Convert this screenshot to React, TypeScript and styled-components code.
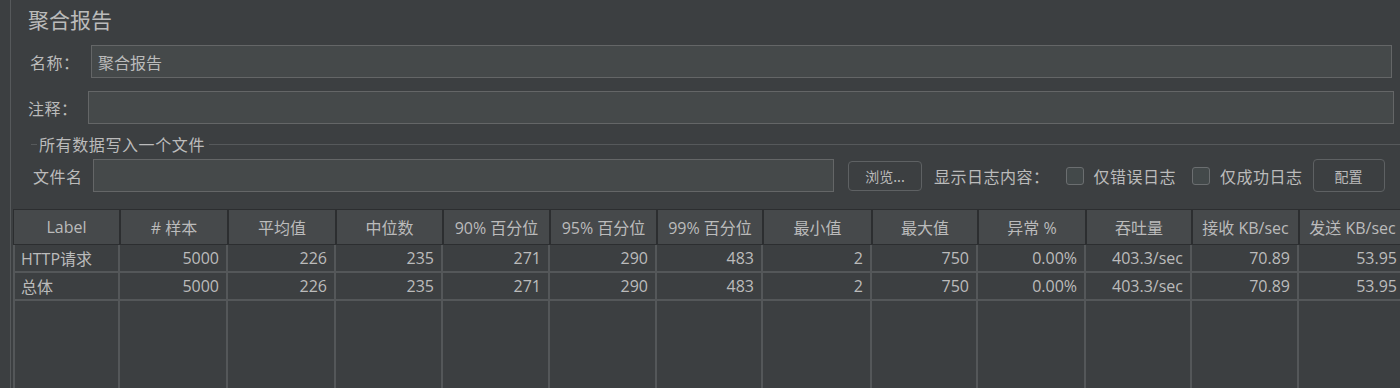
import React from "react";
import styled, { createGlobalStyle } from "styled-components";

const GlobalStyle = createGlobalStyle`
  html, body {
    margin: 0;
    padding: 0;
    background: #3c3f41;
    overflow: hidden;
  }
  body {
    font-family: "Open Sans", "Noto Sans CJK SC", sans-serif;
    color: #bbbbbb;
  }
`;

const Page = styled.div`
  width: 1400px;
  height: 388px;
  background: #3c3f41;
  display: flex;
  overflow: hidden;
`;

const Gutter = styled.div`
  width: 10px;
  flex: none;
  border-right: 1px solid #56595b;
`;

const Panel = styled.div`
  flex: 1;
  min-width: 0;
  display: flex;
  flex-direction: column;
  padding-left: 2px;
`;

const Title = styled.div`
  font-family: "Noto Sans CJK SC", sans-serif;
  font-size: 21px;
  line-height: 28px;
  height: 28px;
  margin-top: 5px;
  padding-left: 15px;
  color: #bbbbbb;
`;

const FieldRow = styled.div<{ $pl: number; $pr: number; $mt: number }>`
  display: flex;
  align-items: center;
  padding-left: ${(p) => p.$pl}px;
  padding-right: ${(p) => p.$pr}px;
  margin-top: ${(p) => p.$mt}px;
`;

const Label = styled.span<{ $w?: number; $ml?: number }>`
  font-family: "Noto Sans CJK SC", sans-serif;
  font-size: 16px;
  letter-spacing: 0.5px;
  color: #bbbbbb;
  width: ${(p) => (p.$w ? `${p.$w}px` : "auto")};
  margin-left: ${(p) => p.$ml ?? 0}px;
  flex: none;
  white-space: nowrap;
`;

const TextInput = styled.div`
  flex: 1;
  height: 31px;
  background: #45494a;
  border: 1px solid #646667;
  display: flex;
  align-items: center;
  padding-left: 6px;
  font-family: "Noto Sans CJK SC", sans-serif;
  font-size: 16px;
  color: #bbbbbb;
`;

const Legend = styled.div`
  display: flex;
  align-items: center;
  margin-top: 9px;
  padding-left: 18px;
  height: 22px;
  &::before {
    content: "";
    width: 6px;
    height: 1px;
    background: #56595b;
    margin-right: 2px;
  }
  &::after {
    content: "";
    flex: 1;
    height: 1px;
    background: #56595b;
    margin-left: 4px;
  }
`;

const LegendText = styled.span`
  font-family: "Noto Sans CJK SC", sans-serif;
  font-size: 16px;
  letter-spacing: 0.6px;
  color: #bbbbbb;
`;

const FileRow = styled.div`
  display: flex;
  align-items: center;
  margin-top: 4px;
  padding-left: 20px;
  height: 33px;
`;

const FileInput = styled.div`
  width: 739px;
  height: 31px;
  background: #45494a;
  border: 1px solid #646667;
  flex: none;
`;

const Button = styled.div<{ $w: number; $h: number; $ml: number }>`
  width: ${(p) => p.$w}px;
  height: ${(p) => p.$h}px;
  margin-left: ${(p) => p.$ml}px;
  box-sizing: border-box;
  border: 1px solid #5e6163;
  border-radius: 4px;
  background: #3c3f41;
  display: flex;
  align-items: center;
  justify-content: center;
  font-family: "Noto Sans CJK SC", sans-serif;
  font-size: 14px;
  color: #bbbbbb;
  flex: none;
`;

const Check = styled.span<{ $ml: number }>`
  width: 18px;
  height: 18px;
  box-sizing: border-box;
  border: 1px solid #6b6e70;
  border-radius: 3px;
  background: #43494a;
  margin-left: ${(p) => p.$ml}px;
  margin-right: 10px;
  flex: none;
`;

const Table = styled.div`
  margin-top: 17px;
  flex: 1;
  display: flex;
  flex-direction: column;
  min-height: 0;
`;

const cols = "107px 108px 108px 107px 107px 107px 106px 109px 106px 108px 106px 107px 107px";

const HeaderRow = styled.div`
  display: grid;
  grid-template-columns: ${cols};
  height: 36px;
  background: #2c2e30;
  border-top: 1px solid #2c2e30;
  box-sizing: border-box;
`;

const HeaderCell = styled.div`
  background: #46494b;
  margin: 0 1px 1px 1px;
  display: flex;
  align-items: center;
  justify-content: center;
  font-size: 16px;
  color: #bbbbbb;
  white-space: nowrap;
  overflow: hidden;
`;

const BodyRow = styled.div<{ $fill?: boolean }>`
  display: grid;
  grid-template-columns: ${cols};
  height: ${(p) => (p.$fill ? "auto" : "28px")};
  flex: ${(p) => (p.$fill ? 1 : "none")};
`;

const Cell = styled.div<{ $left?: boolean }>`
  border-right: 2px solid #545759;
  border-bottom: 2px solid #545759;
  display: flex;
  align-items: center;
  justify-content: ${(p) => (p.$left ? "flex-start" : "flex-end")};
  padding: 0 7px 0 6px;
  font-size: 16px;
  color: #bbbbbb;
  white-space: nowrap;
  overflow: hidden;
  &:first-child {
    border-left: 2px solid #545759;
  }
`;

const FillCell = styled.div`
  border-right: 2px solid #545759;
  &:first-child {
    border-left: 2px solid #545759;
  }
`;

const headers = [
  "Label",
  "# 样本",
  "平均值",
  "中位数",
  "90% 百分位",
  "95% 百分位",
  "99% 百分位",
  "最小值",
  "最大值",
  "异常 %",
  "吞吐量",
  "接收 KB/sec",
  "发送 KB/sec",
];

const rows = [
  ["HTTP请求", "5000", "226", "235", "271", "290", "483", "2", "750", "0.00%", "403.3/sec", "70.89", "53.95"],
  ["总体", "5000", "226", "235", "271", "290", "483", "2", "750", "0.00%", "403.3/sec", "70.89", "53.95"],
];

export default function App() {
  return (
    <>
      <GlobalStyle />
      <Page>
        <Gutter />
        <Panel>
          <Title>聚合报告</Title>
          <FieldRow $pl={17} $pr={8} $mt={12}>
            <Label $w={61}>名称：</Label>
            <TextInput>聚合报告</TextInput>
          </FieldRow>
          <FieldRow $pl={15} $pr={6} $mt={13}>
            <Label $w={60}>注释：</Label>
            <TextInput />
          </FieldRow>
          <Legend>
            <LegendText>所有数据写入一个文件</LegendText>
          </Legend>
          <FileRow>
            <Label $w={60}>文件名</Label>
            <FileInput />
            <Button $w={74} $h={30} $ml={14}>浏览...</Button>
            <Label $ml={12}>显示日志内容：</Label>
            <Check $ml={16} />
            <Label>仅错误日志</Label>
            <Check $ml={16} />
            <Label>仅成功日志</Label>
            <Button $w={72} $h={33} $ml={10}>配置</Button>
          </FileRow>
          <Table>
            <HeaderRow>
              {headers.map((h) => (
                <HeaderCell key={h}>{h}</HeaderCell>
              ))}
            </HeaderRow>
            {rows.map((r, i) => (
              <BodyRow key={i}>
                {r.map((v, j) => (
                  <Cell key={j} $left={j === 0}>
                    {v}
                  </Cell>
                ))}
              </BodyRow>
            ))}
            <BodyRow $fill>
              {headers.map((h) => (
                <FillCell key={h} />
              ))}
            </BodyRow>
          </Table>
        </Panel>
      </Page>
    </>
  );
}
